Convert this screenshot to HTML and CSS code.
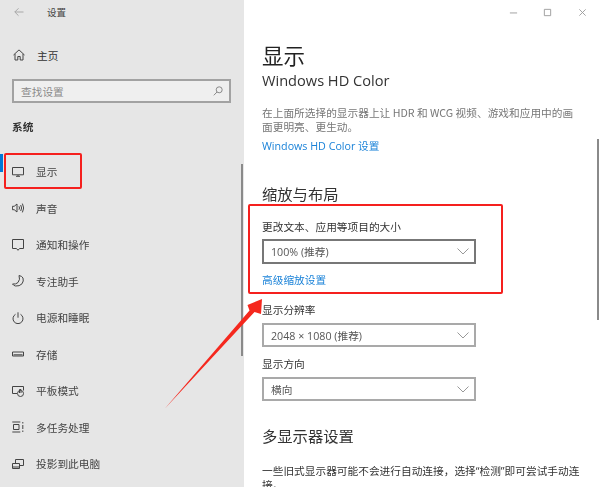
FILE: index.html
```html
<!DOCTYPE html>
<html lang="zh-CN">
<head>
<meta charset="utf-8">
<title>设置</title>
<link rel="stylesheet" href="styles.css">
</head>
<body>
<div class="app">
  <aside class="side">
    <div class="side-title">
      <svg class="back" viewBox="0 0 10 10"><path d="M9.500 5H.8M4.500 1.300.8 5l3.700 3.700"/></svg>
      <span>设置</span>
    </div>
    <div class="home">
      <svg class="icon" viewBox="0 0 12 12"><path d="M.5 6 6 .9 11.500 6M2 5v6h2.800V7.500h2.400V11H10V5"/></svg>
      <span>主页</span>
    </div>
    <div class="search">
      <span>查找设置</span>
      <svg class="lens" viewBox="0 0 10 10"><circle cx="6.200" cy="3.800" r="3"/><path d="M4 6 .8 9.300"/></svg>
    </div>
    <div class="group">系统</div>
    <nav class="nav">
      <div class="item active">
        <svg class="icon" viewBox="0 0 12 12"><path d="M.5 1.500h11v7.300H.5zM4 10.300h4M6 9v1"/></svg>
        <span>显示</span>
      </div>
      <div class="item">
        <svg class="icon" viewBox="0 0 12 12"><path d="M.4 4.300h1.800L5 2v8L2.200 7.700H.4zM7 4.300q1 1.700 0 3.400M8.700 3q1.800 3 0 6M10.400 1.600q2.600 4.400 0 8.800"/></svg>
        <span>声音</span>
      </div>
      <div class="item">
        <svg class="icon" viewBox="0 0 12 12"><path d="M.5.500h11v9H7.500L6 11.300 4.500 9.500H.5z"/></svg>
        <span>通知和操作</span>
      </div>
      <div class="item">
        <svg class="icon" viewBox="0 0 12 12"><path d="M7 .5q3 .5 4 2.500 1 3-1 5.800-2.500 2.700-6.500 2.200Q1.500 10.500.5 9 4 9.500 6 7.500 8.500 4.500 7 .5z"/></svg>
        <span>专注助手</span>
      </div>
      <div class="item">
        <svg class="icon" viewBox="0 0 12 12"><path d="M3.500 2.300a5 5 0 1 0 5 0M6 .3v5.400"/></svg>
        <span>电源和睡眠</span>
      </div>
      <div class="item">
        <svg class="icon" viewBox="0 0 12 12"><path d="M.5 4h11v4H.5z"/><path d="M1.500 6.800h9"/></svg>
        <span>存储</span>
      </div>
      <div class="item">
        <svg class="icon" viewBox="0 0 12 12"><path d="M5 8.500H.5v-7h11v4"/><circle cx="8.500" cy="8.500" r="3"/><path d="M7.500 8V4.500h1.500V8"/></svg>
        <span>平板模式</span>
      </div>
      <div class="item">
        <svg class="icon" viewBox="0 0 12 12"><path d="M.3 1h8M.3 11h8M1.500 3.500h5.500v5H1.500zM10.800 1v1.500M10.800 4v4M10.800 9.500V11"/></svg>
        <span>多任务处理</span>
      </div>
      <div class="item">
        <svg class="icon" viewBox="0 0 12 12"><path d="M3.500 5V1.500h8v6H8M.5 5.500h7v5h-7zM.5 9h7"/></svg>
        <span>投影到此电脑</span>
      </div>
    </nav>
  </aside>
  <main class="main">
    <div class="win">
      <svg class="win-i" viewBox="0 0 10 10"><path d="M1 5.500h8"/></svg>
      <svg class="win-i" viewBox="0 0 10 10"><path d="M1.500 1.500h7v7h-7z"/></svg>
      <svg class="win-i" viewBox="0 0 10 10"><path d="m1.500 1.500 7 7m0-7-7 7"/></svg>
    </div>
    <h1 class="title">显示</h1>
    <h2 class="sub">Windows HD Color</h2>
    <p class="desc">在上面所选择的显示器上让 HDR 和 WCG 视频、游戏和应用中的画面更明亮、更生动。</p>
    <a class="link hd">Windows HD Color 设置</a>
    <h3 class="head scale">缩放与布局</h3>
    <div class="label first">更改文本、应用等项目的大小</div>
    <div class="select dark"><span>100% (推荐)</span><svg class="chev" viewBox="0 0 12 7"><path d="m.5.500 5.500 5.500L11.500.500"/></svg></div>
    <a class="link adv">高级缩放设置</a>
    <div class="label res">显示分辨率</div>
    <div class="select"><span>2048 × 1080 (推荐)</span><svg class="chev" viewBox="0 0 12 7"><path d="m.5.500 5.500 5.500L11.500.500"/></svg></div>
    <div class="label dir">显示方向</div>
    <div class="select"><span>横向</span><svg class="chev" viewBox="0 0 12 7"><path d="m.5.500 5.500 5.500L11.500.500"/></svg></div>
    <h3 class="head multi">多显示器设置</h3>
    <p class="text">一些旧式显示器可能不会进行自动连接，选择“检测”即可尝试手动连接。</p>
  </main>
  <div class="bar bar-side"></div>
  <div class="bar bar-main"></div>
  <div class="mark mark-nav"></div>
  <div class="mark mark-scale"></div>
  <svg class="arrow" viewBox="0 0 600 487"><path d="M164.500 409 249.500 310.500l-2-5.500L262 299l-1 15-6.500-2z"/></svg>
</div>
</body>
</html>
```
FILE: styles.css
```css
* { box-sizing: border-box; }
html, body { margin: 0; height: 100%; overflow: hidden; }
body {
  font-family: "Noto Sans CJK SC", "Open Sans", sans-serif;
  font-size: 10.7px;
  color: #333;
  background: #fff;
}
.app { position: relative; display: flex; width: 600px; height: 487px; overflow: hidden; filter: blur(.35px); }
svg { fill: none; stroke: #444; stroke-width: 1; flex: none; }

.side { width: 244px; flex: none; background: #e6e6e6; display: flex; flex-direction: column; }
.side-title { height: 24px; display: flex; align-items: center; padding-left: 14px; font-size: 9.500px; color: #444; }
.back { width: 10px; height: 10px; margin-right: 23px; stroke: #a8a8a8; }
.home { height: 36px; margin-top: 13px; display: flex; align-items: center; padding-left: 13px; font-size: 10.700px; color: #333; }
.icon { width: 12px; height: 12px; margin-right: 12px; }
.search {
  margin: 6px 13px 0 12px; height: 24px; border: 2px solid #a2a2a2; background: #efefef;
  display: flex; align-items: center; justify-content: space-between; padding: 0 6px 0 7px; color: #8a8a8a;
}
.lens { width: 10px; height: 10px; stroke: #8a8a8a; }
.group { margin-top: 15px; padding-left: 12px; height: 18px; line-height: 18px; font-weight: 700; color: #333; }
.nav { margin-top: 17.500px; display: flex; flex-direction: column; }
.item { height: 36.500px; display: flex; align-items: center; padding-left: 12px; position: relative; color: #444; }
.active::before { content: ""; position: absolute; left: 0; top: 0; width: 3px; height: 18px; background: #0078d7; }

.main { flex: 1; min-width: 0; padding-left: 18px; }
.win { height: 24px; display: flex; align-items: center; justify-content: flex-end; gap: 25.500px; padding-right: 13.500px; }
.win-i { width: 9px; height: 9px; stroke: #9a9a9a; }
.title { margin: 18px 0 0; font-size: 21.500px; line-height: 26px; font-weight: 400; color: #222; }
.sub { margin: 2px 0 0; font-family: "Open Sans", sans-serif; font-size: 14.600px; line-height: 20px; font-weight: 400; color: #333; }
.desc { margin: 16px 12px 0 0; width: 320px; font-size: 10.700px; line-height: 14px; color: #777; }
.link { display: block; color: #1a82d8; font-size: 10.700px; line-height: 14px; }
.hd { margin-top: 5px; font-family: "Open Sans", "Noto Sans CJK SC", sans-serif; }
.head { margin: 0; font-size: 15.300px; line-height: 20px; font-weight: 400; color: #333; }
.scale { margin-top: 30px; }
.label { line-height: 14px; color: #333; }
.first { margin-top: 17px; }
.select {
  width: 214px; height: 25px; margin-top: 5px; border: 2px solid #a9a9a9; display: flex; align-items: center; justify-content: space-between;
  padding: 0 5px 0 7px; color: #555; font-family: "Open Sans", "Noto Sans CJK SC", sans-serif;
}
.dark { border-color: #777; }
.chev { width: 12px; height: 7px; stroke: #999; }
.adv { margin-top: 9px; }
.res { margin-top: 16px; }
.res + .select { margin-top: 6px; height: 24px; }
.dir { margin-top: 10px; }
.dir + .select { margin-top: 6px; height: 24px; }
.multi { margin-top: 24px; }
.text { margin: 20px 0 0; width: 320px; line-height: 13.500px; color: #333; font-family: "Open Sans", "Noto Sans CJK SC", sans-serif; }

.bar { position: absolute; width: 2px; background: #8a8a8a; }
.bar-side { left: 241px; top: 164px; height: 192px; }
.bar-main { left: 597px; top: 139px; height: 181px; }
.mark { position: absolute; border: 2px solid #f5201e; border-radius: 2px; }
.mark-nav { left: 4px; top: 153px; width: 78px; height: 36px; }
.mark-scale { left: 248px; top: 204px; width: 255px; height: 90px; }
.arrow { position: absolute; left: 0; top: 0; width: 600px; height: 487px; }
.arrow path { fill: #f5281e; stroke: none; }
```
